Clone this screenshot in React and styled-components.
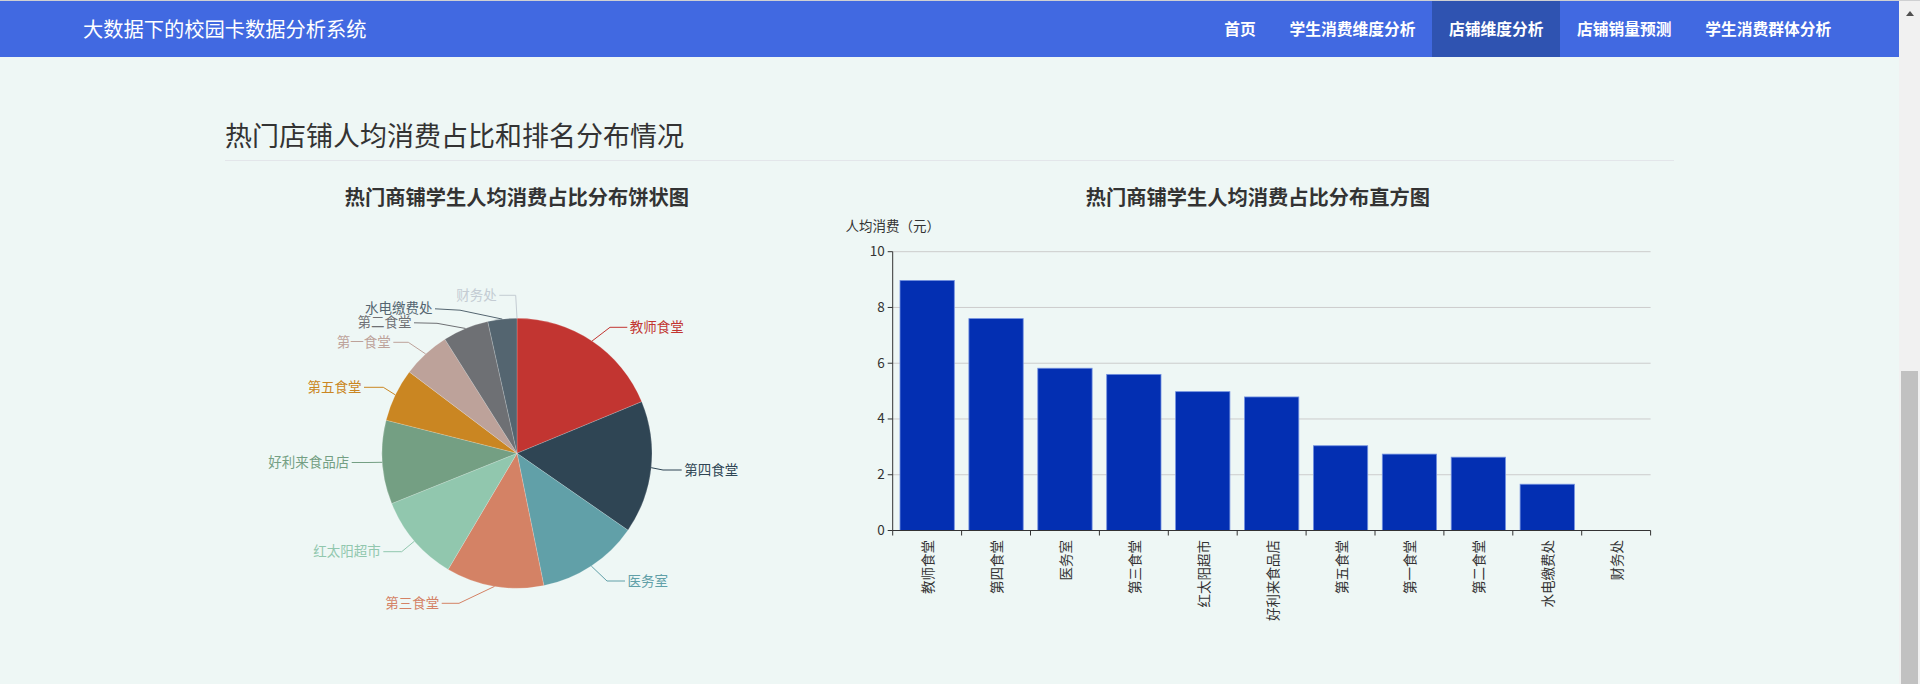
import React from "react";
import styled, { createGlobalStyle } from "styled-components";

const NAV_ITEMS = ["首页", "学生消费维度分析", "店铺维度分析", "店铺销量预测", "学生消费群体分析"];
const ACTIVE_NAV = "店铺维度分析";

// per-shop average spend; label bend/end points follow the echarts layout of the original page
const SHOPS = [
    { name: "教师食堂", value: 8.97, color: "#c23531", bend: [385, 116.3], end: [402.3, 116.3] },
    { name: "第四食堂", value: 7.6, color: "#2f4554", bend: [438, 259], end: [456.7, 259] },
    { name: "医务室", value: 5.82, color: "#61a0a8", bend: [382, 370], end: [400, 370] },
    { name: "第三食堂", value: 5.6, color: "#d48265", bend: [234, 392.3], end: [216.7, 392.3] },
    { name: "红太阳超市", value: 4.98, color: "#91c7ae", bend: [176.7, 340.7], end: [158.3, 340.7] },
    { name: "好利来食品店", value: 4.79, color: "#749f83", bend: [143, 251.5], end: [126.7, 251.5] },
    { name: "第五食堂", value: 3.04, color: "#ca8622", bend: [158.3, 176.3], end: [139, 176.3] },
    { name: "第一食堂", value: 2.74, color: "#bda29a", bend: [183.3, 131.3], end: [168.3, 131.3] },
    { name: "第二食堂", value: 2.63, color: "#6e7074", bend: [212, 112.3], end: [189, 111.8] },
    { name: "水电缴费处", value: 1.66, color: "#546570", bend: [235, 99.2], end: [210, 97.8] },
    { name: "财务处", value: 0, color: "#c4ccd3", bend: [290.7, 84.3], end: [274.3, 84.3] },
];

// noto cjk sits a little low with a central baseline
const TEXT_NUDGE = -1.5;

const GlobalStyle = createGlobalStyle`
    html, body, #root {
        height: 100%;
        margin: 0;
    }
    body {
        overflow: hidden;
        background: #eef7f5;
        font-family: "Noto Sans CJK SC", "Liberation Sans", sans-serif;
        color: #333;
    }
`;

const Frame = styled.div`
    display: flex;
    height: 100vh;
    box-sizing: border-box;
    border-top: 1px solid #cfd0d2;
`;

const Main = styled.div`
    flex: 1;
    min-width: 0;
`;

const NavBar = styled.nav`
    height: 56px;
    background: #4169e1;
    display: flex;
    justify-content: space-between;
    padding: 0 51px 0 66px;
`;

const Brand = styled.div`
    padding: 0 17px;
    line-height: 56px;
    font-size: 20.25px;
    color: #fff;
`;

const NavList = styled.ul`
    display: flex;
    margin: 0;
    padding: 0;
    list-style: none;
`;

const NavItem = styled.li`
    padding: 0 16.8px;
    line-height: 56px;
    font-size: 15.75px;
    font-weight: 700;
    color: #fff;
    background: ${(p) => (p.$active ? "#2f53b1" : "transparent")};
    cursor: pointer;
`;

const Container = styled.div`
    width: 1449px;
    margin: 0 auto;
`;

const PageHeader = styled.h3`
    margin: 63px 0 0;
    padding-bottom: 10px;
    border-bottom: 1px solid #e3e6ea;
    font-size: 27px;
    line-height: 29.7px;
    font-weight: 400;
    color: #333;
`;

const ChartRow = styled.div`
    display: grid;
    grid-template-columns: 584px 832px;
    column-gap: 33px;
    margin-top: 22px;
`;

const ChartPanel = styled.div`
    display: flex;
    flex-direction: column;
`;

const ChartTitle = styled.div`
    text-align: center;
    font-size: 20.25px;
    line-height: 28px;
    font-weight: 700;
    color: #333;
`;

const ChartSvg = styled.svg`
    display: block;
    font-family: "Noto Sans CJK SC", "Liberation Sans", sans-serif;
    font-size: 13.5px;
`;

const ScrollTrack = styled.div`
    width: 21px;
    background: #f1f1f1;
    display: flex;
    flex-direction: column;
    align-items: center;
`;

const ScrollArrow = styled.div`
    margin-top: 10px;
    margin-left: 1px;
    width: 0;
    height: 0;
    border-left: 4px solid transparent;
    border-right: 4px solid transparent;
    border-bottom: 5px solid #505050;
`;

const ScrollThumb = styled.div`
    margin-top: auto;
    width: 17px;
    height: 313px;
    background: #c1c1c1;
`;

const PIE = { cx: 292, cy: 242.3, r: 135 };

const polar = (deg, r) => {
    const a = (deg * Math.PI) / 180;
    return [PIE.cx + r * Math.sin(a), PIE.cy - r * Math.cos(a)];
};

function PieChart() {
    const total = SHOPS.reduce((s, d) => s + d.value, 0);
    let start = 0;
    const slices = SHOPS.map((d) => {
        const sweep = (d.value / total) * 360;
        const s = { ...d, from: start, to: start + sweep, mid: start + sweep / 2 };
        start += sweep;
        return s;
    });

    return (
        <ChartSvg width={584} height={440}>
            {slices.filter((s) => s.value > 0).map((s) => {
                const [x0, y0] = polar(s.from, PIE.r);
                const [x1, y1] = polar(s.to, PIE.r);
                const large = s.to - s.from > 180 ? 1 : 0;
                return (
                    <path
                        key={s.name}
                        d={`M${PIE.cx} ${PIE.cy} L${x0} ${y0} A${PIE.r} ${PIE.r} 0 ${large} 1 ${x1} ${y1} Z`}
                        fill={s.color}
                        stroke="rgba(255,255,255,0.3)"
                        strokeWidth={0.6}
                    />
                );
            })}
            {slices.map((s) => {
                const mid = s.value > 0 ? s.mid : 360;
                const [ex, ey] = polar(mid, PIE.r);
                const left = s.end[0] < s.bend[0];
                return (
                    <g key={s.name}>
                        <polyline
                            points={`${ex},${ey} ${s.bend[0]},${s.bend[1]} ${s.end[0]},${s.end[1]}`}
                            fill="none"
                            stroke={s.color}
                            strokeWidth={1}
                        />
                        <text
                            x={s.end[0] + (left ? -2.5 : 2.5)}
                            y={s.end[1] + TEXT_NUDGE}
                            textAnchor={left ? "end" : "start"}
                            dominantBaseline="central"
                            fill={s.color}
                        >
                            {s.name}
                        </text>
                    </g>
                );
            })}
        </ChartSvg>
    );
}

const GRID = { left: 50.7, right: 808.6, top: 40.7, bottom: 319.5, max: 10 };

function BarChart() {
    const band = (GRID.right - GRID.left) / SHOPS.length;
    const barW = 54.3;
    const yOf = (v) => GRID.bottom - (v / GRID.max) * (GRID.bottom - GRID.top);
    const ticks = [0, 2, 4, 6, 8, 10];

    return (
        <ChartSvg width={832} height={440}>
            <text x={GRID.left} y={15 + TEXT_NUDGE} textAnchor="middle" dominantBaseline="central" fill="#333">
                人均消费（元）
            </text>
            {ticks.map((t) => (
                <g key={t}>
                    <line x1={GRID.left} x2={GRID.right} y1={yOf(t)} y2={yOf(t)} stroke="#ccc" />
                    <line x1={GRID.left - 5} x2={GRID.left} y1={yOf(t)} y2={yOf(t)} stroke="#333" />
                    <text
                        x={GRID.left - 8}
                        y={yOf(t) + TEXT_NUDGE}
                        textAnchor="end"
                        dominantBaseline="central"
                        fill="#333"
                    >
                        {t}
                    </text>
                </g>
            ))}
            {SHOPS.map((d, i) => {
                const x = GRID.left + i * band;
                const cx = x + band / 2;
                return (
                    <g key={d.name}>
                        {d.value > 0 && (
                            <rect
                                x={cx - barW / 2}
                                y={yOf(d.value)}
                                width={barW}
                                height={GRID.bottom - yOf(d.value)}
                                fill="#032fb2"
                                stroke="#7391e0"
                                strokeWidth={0.8}
                            />
                        )}
                        <text
                            transform={`translate(${cx}, ${GRID.bottom + 9.5}) rotate(-90)`}
                            textAnchor="end"
                            dominantBaseline="central"
                            fill="#333"
                        >
                            {d.name}
                        </text>
                    </g>
                );
            })}
            {SHOPS.map((d, i) => (
                <line
                    key={d.name}
                    x1={GRID.left + i * band}
                    x2={GRID.left + i * band}
                    y1={GRID.bottom}
                    y2={GRID.bottom + 5}
                    stroke="#333"
                />
            ))}
            <line x1={GRID.right} x2={GRID.right} y1={GRID.bottom} y2={GRID.bottom + 5} stroke="#333" />
            <line x1={GRID.left} x2={GRID.right} y1={GRID.bottom} y2={GRID.bottom} stroke="#333" />
            <line x1={GRID.left} x2={GRID.left} y1={GRID.top} y2={GRID.bottom} stroke="#333" />
        </ChartSvg>
    );
}

export default function App() {
    return (
        <>
            <GlobalStyle />
            <Frame>
                <Main>
                    <NavBar>
                        <Brand>大数据下的校园卡数据分析系统</Brand>
                        <NavList>
                            {NAV_ITEMS.map((item) => (
                                <NavItem key={item} $active={item === ACTIVE_NAV}>
                                    {item}
                                </NavItem>
                            ))}
                        </NavList>
                    </NavBar>
                    <Container>
                        <PageHeader>热门店铺人均消费占比和排名分布情况</PageHeader>
                        <ChartRow>
                            <ChartPanel>
                                <ChartTitle>热门商铺学生人均消费占比分布饼状图</ChartTitle>
                                <PieChart />
                            </ChartPanel>
                            <ChartPanel>
                                <ChartTitle>热门商铺学生人均消费占比分布直方图</ChartTitle>
                                <BarChart />
                            </ChartPanel>
                        </ChartRow>
                    </Container>
                </Main>
                <ScrollTrack>
                    <ScrollArrow />
                    <ScrollThumb />
                </ScrollTrack>
            </Frame>
        </>
    );
}
